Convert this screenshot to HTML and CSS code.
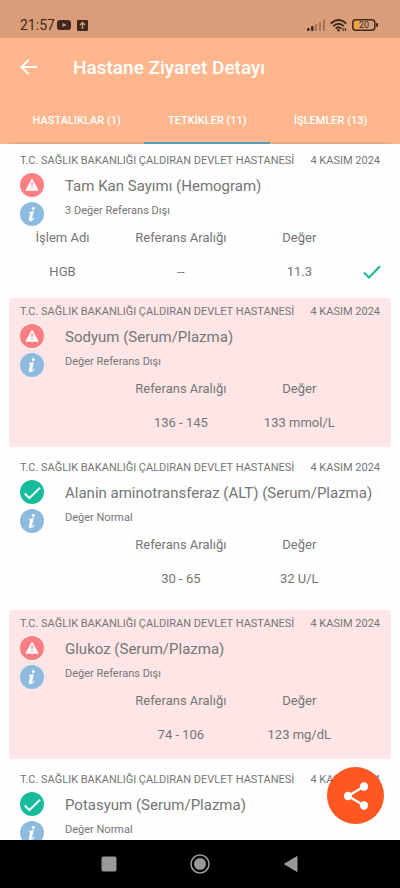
FILE: index.html
```html
<!DOCTYPE html>
<html lang="tr">
<head>
<meta charset="utf-8">
<meta name="viewport" content="width=device-width, initial-scale=1">
<title>Hastane Ziyaret Detayı</title>
<link rel="stylesheet" href="styles.css">
</head>
<body>
<svg class="defs" aria-hidden="true">
  <symbol id="warn" viewBox="0 0 24 24"><circle cx="12" cy="12" r="12" fill="#fb7e83"/><path d="M12 6.2 18 17.2H6z" fill="#fff" stroke="#fff" stroke-width="1" stroke-linejoin="round"/><path d="M11.3 9.3h1.5l-.3 4h-.9zM11.4 14.4h1.3v1.3h-1.3z" fill="#fb7e83"/></symbol>
  <symbol id="ok" viewBox="0 0 24 24"><circle cx="12" cy="12" r="12" fill="#17bd9b"/><path d="m4.800 13.500 4.600 4.600L20 7.800" fill="none" stroke="#fff" stroke-width="2"/></symbol>
  <symbol id="info" viewBox="0 0 24 24"><circle cx="12" cy="12" r="12" fill="#8dbbe0"/><circle cx="13.300" cy="6.500" r="1.500" fill="#fff"/><path d="M9.300 10.200q2.400-.3 4.300-1l-1.900 7.300q-.3 1.200.4.900.7-.4 1.500-1.500l.6.400q-1.600 2.700-3.600 2.700-2.100 0-1.500-2.200l1.300-4.800q.3-1-1.300-1.100z" fill="#fff" stroke="#fff" stroke-width=".5"/></symbol>
</svg>
<div class="app">
  <div class="status">
    <span class="clock">21:57</span>
    <svg width="14" height="10" viewBox="0 0 14 10"><rect width="14" height="10" rx="3" fill="#40291c"/><path d="m5.500 3 4 2-4 2z" fill="#d99e79"/></svg>
    <svg class="upload" width="11" height="11" viewBox="0 0 11 11"><rect width="11" height="11" rx="1" fill="#40291c"/><path d="M5.500 9V2.800M3 5l2.500-2.500L8 5" fill="none" stroke="#d99e79" stroke-width="1.300"/></svg>
    <svg class="signal" width="18" height="12" viewBox="0 0 18 12"><g fill="#40291c"><rect y="9" width="2.600" height="3" rx="1"/><rect x="4" y="7" width="2.600" height="5" rx="1"/><g opacity=".35"><rect x="8" y="5" width="2" height="7" rx="1"/><rect x="12" y="2.500" width="2" height="9.500" rx="1"/><rect x="16" width="2" height="12" rx="1"/></g></g></svg>
    <svg class="wifi" width="17" height="13" viewBox="0 0 17 13"><g fill="none" stroke="#40291c" stroke-width="1.900"><path d="M.7 4.500Q8.500-2.500 16.300 4.500M3.200 7.100Q8.500 2.300 13.800 7.100M5.700 9.500Q8.500 7 11.300 9.500"/><path d="M13 9v3M15.400 9v3" stroke-width="1.200"/></g><circle cx="8.500" cy="11.300" r="1.300" fill="#40291c"/></svg>
    <svg class="battery" width="26" height="12" viewBox="0 0 26 12"><rect x="2" y="2" width="5" height="8" fill="#f2a13c"/><rect x=".8" y=".8" width="22" height="10.400" rx="3" fill="none" stroke="#40291c" stroke-width="1.500"/><rect x="24" y="4" width="2" height="4" rx="1" fill="#40291c"/><text x="12" y="9" text-anchor="middle" class="level">20</text></svg>
  </div>
  <header class="header">
    <div class="bar">
      <button class="back" aria-label="Geri"><svg width="18" height="16" viewBox="0 0 18 16"><path d="M17 8H2M8.500 1 1.500 8l7 7" fill="none" stroke="#fff" stroke-width="2"/></svg></button>
      <h1>Hastane Ziyaret Detayı</h1>
    </div>
    <nav class="tabs">
      <a href="#hastaliklar">HASTALIKLAR (1)</a>
      <a href="#tetkikler" class="active" aria-current="page">TETKİKLER (11)</a>
      <a href="#islemler">İŞLEMLER (13)</a>
    </nav>
  </header>
  <main class="list">
    <article class="card compact">
      <div class="meta"><span>T.C. SAĞLIK BAKANLIĞI ÇALDIRAN DEVLET HASTANESİ</span><span>4 KASIM 2024</span></div>
      <div class="summary">
        <div class="icons"><svg><use href="#warn"/></svg><button aria-label="Bilgi"><svg><use href="#info"/></svg></button></div>
        <div><h2>Tam Kan Sayımı (Hemogram)</h2><p>3 Değer Referans Dışı</p></div>
      </div>
      <table>
        <tr><th class="name">İşlem Adı</th><th class="range">Referans Aralığı</th><th class="value">Değer</th><th></th></tr>
        <tr><td>HGB</td><td>--</td><td>11.3</td><td><svg class="tick" width="18" height="14" viewBox="0 0 18 14"><path d="m1 7.500 5 5L17 1.200" fill="none" stroke="#24b795" stroke-width="2.200"/></svg></td></tr>
      </table>
    </article>
    <article class="card alert">
      <div class="meta"><span>T.C. SAĞLIK BAKANLIĞI ÇALDIRAN DEVLET HASTANESİ</span><span>4 KASIM 2024</span></div>
      <div class="summary">
        <div class="icons"><svg><use href="#warn"/></svg><button aria-label="Bilgi"><svg><use href="#info"/></svg></button></div>
        <div><h2>Sodyum (Serum/Plazma)</h2><p>Değer Referans Dışı</p></div>
      </div>
      <table>
        <tr><th class="name"></th><th class="range">Referans Aralığı</th><th class="value">Değer</th><th></th></tr>
        <tr><td></td><td>136 - 145</td><td>133 mmol/L</td><td></td></tr>
      </table>
    </article>
    <article class="card">
      <div class="meta"><span>T.C. SAĞLIK BAKANLIĞI ÇALDIRAN DEVLET HASTANESİ</span><span>4 KASIM 2024</span></div>
      <div class="summary">
        <div class="icons"><svg><use href="#ok"/></svg><button aria-label="Bilgi"><svg><use href="#info"/></svg></button></div>
        <div><h2>Alanin aminotransferaz (ALT) (Serum/Plazma)</h2><p>Değer Normal</p></div>
      </div>
      <table>
        <tr><th class="name"></th><th class="range">Referans Aralığı</th><th class="value">Değer</th><th></th></tr>
        <tr><td></td><td>30 - 65</td><td>32 U/L</td><td></td></tr>
      </table>
    </article>
    <article class="card alert">
      <div class="meta"><span>T.C. SAĞLIK BAKANLIĞI ÇALDIRAN DEVLET HASTANESİ</span><span>4 KASIM 2024</span></div>
      <div class="summary">
        <div class="icons"><svg><use href="#warn"/></svg><button aria-label="Bilgi"><svg><use href="#info"/></svg></button></div>
        <div><h2>Glukoz (Serum/Plazma)</h2><p>Değer Referans Dışı</p></div>
      </div>
      <table>
        <tr><th class="name"></th><th class="range">Referans Aralığı</th><th class="value">Değer</th><th></th></tr>
        <tr><td></td><td>74 - 106</td><td>123 mg/dL</td><td></td></tr>
      </table>
    </article>
    <article class="card">
      <div class="meta"><span>T.C. SAĞLIK BAKANLIĞI ÇALDIRAN DEVLET HASTANESİ</span><span>4 KASIM 2024</span></div>
      <div class="summary">
        <div class="icons"><svg><use href="#ok"/></svg><button aria-label="Bilgi"><svg><use href="#info"/></svg></button></div>
        <div><h2>Potasyum (Serum/Plazma)</h2><p>Değer Normal</p></div>
      </div>
    </article>
  </main>
  <div class="sysnav">
    <button aria-label="Son uygulamalar"><svg width="16" height="16" viewBox="0 0 16 16"><rect x=".5" y=".5" width="15" height="15" rx="2" fill="#999"/></svg></button>
    <button aria-label="Ana ekran"><svg width="20" height="20" viewBox="0 0 20 20"><circle cx="10" cy="10" r="9" fill="none" stroke="#999" stroke-width="1.600"/><circle cx="10" cy="10" r="6" fill="#999"/></svg></button>
    <button aria-label="Geri"><svg width="16" height="18" viewBox="0 0 16 18"><path d="M14 1.500v15L1.500 9z" fill="#999" stroke="#999" stroke-linejoin="round"/></svg></button>
  </div>
  <button class="fab" aria-label="Paylaş"><svg width="26" height="28" viewBox="0 0 26 28"><path d="M21 4.500 5 14l16 9.500" fill="none" stroke="#fff" stroke-width="2.400"/><g fill="#fff"><circle cx="21" cy="4.500" r="4.200"/><circle cx="5" cy="14" r="4.200"/><circle cx="21" cy="23.500" r="4.200"/></g></svg></button>
</div>
</body>
</html>
```
FILE: styles.css
```css
* { box-sizing: border-box; }
body { margin: 0; font-family: Roboto, "Liberation Sans", sans-serif; color: #757575; background: #fefefe; }
button { padding: 0; border: 0; background: none; display: flex; align-items: center; justify-content: center; }
svg { display: block; flex: none; }
.defs { position: absolute; width: 0; height: 0; }
.app { position: relative; height: 100vh; display: flex; flex-direction: column; overflow: hidden; }

.status { flex: none; height: 38px; padding: 12px 22px 0 20px; display: flex; align-items: center; background: #d99e79; color: #40291c; }
.clock { font-size: 14px; font-weight: 400; line-height: 24px; margin-right: 2px; }
.upload { margin-left: 6px; }
.signal { margin-left: auto; }
.wifi { margin-left: 5px; }
.battery { margin-left: 5px; }
.level { font-size: 9px; fill: #40291c; }

.header { flex: none; background: #ffb68d; color: #fff; }
.bar { height: 58px; padding-left: 20px; display: flex; align-items: center; }
.back { width: 18px; height: 48px; }
h1 { margin: 0 0 0 35px; font-size: 19px; font-weight: 500; }
.tabs { display: flex; padding: 0 9px; }
.tabs a { flex: 1 1 auto; height: 48px; padding-top: 2px; display: flex; align-items: center; justify-content: center; border-bottom: 2px solid #e7aa87; color: #fff; font-size: 11px; font-weight: 500; text-decoration: none; }
.tabs .active { border-color: #539fb9; }

.list { flex: 1; min-height: 0; overflow: hidden; padding: 3px 9px 0; display: flex; flex-direction: column; gap: 7px; }
.card { flex: none; padding: 5px 0 14px; border-radius: 3px; }
.compact { padding-bottom: 9px; }
.alert { background: #fee6e6; }
.meta { display: flex; justify-content: space-between; padding: 0 11px; font-size: 11px; line-height: 18px; white-space: nowrap; }
.summary { display: flex; gap: 21px; padding: 3px 11px 0; }
.icons { display: flex; flex-direction: column; gap: 5px; width: 24px; }
.icons svg { width: 24px; height: 24px; }
h2 { margin: 0; font-size: 15px; font-weight: 400; line-height: 26px; }
p { margin: 0; font-size: 11px; line-height: 24px; }
table { width: 100%; table-layout: fixed; border-collapse: collapse; font-size: 13px; text-align: center; }
th { padding: 2px 0; height: 24px; font-weight: 400; line-height: 20px; }
td { padding: 12px 0 0; height: 32px; line-height: 20px; }
.name, .value { width: 28%; }
.range { width: 34%; }
.tick { margin: auto; }

.sysnav { flex: none; height: 48px; padding: 0 64px; display: flex; background: #000; }
.sysnav button { flex: 1; }
.fab { position: absolute; right: 16px; bottom: 64px; width: 57px; height: 57px; border-radius: 50%; background: #fe5722; }
```
